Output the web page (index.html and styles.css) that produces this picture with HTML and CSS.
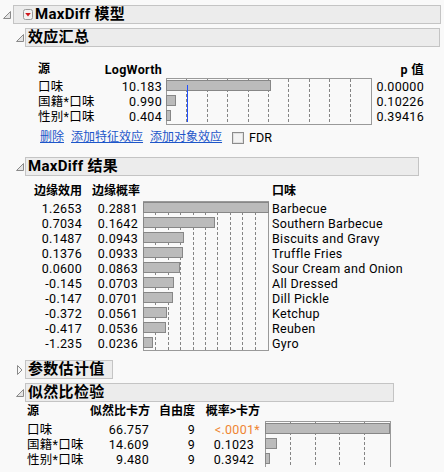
FILE: index.html
```html
<!DOCTYPE html>
<html lang="zh">
<head>
<meta charset="utf-8">
<title>MaxDiff 模型</title>
<link rel="stylesheet" href="styles.css">
</head>
<body>
<div class="page">
  <div class="ohead">
    <span class="tri"><svg width="8" height="8" viewBox="0 0 8 8"><path d="M7.5 0.5 L7.5 7.5 L0.5 7.5 Z" fill="#e4e4e4" stroke="#8a8a8a" stroke-width="1"/></svg></span>
    <div class="hbox">
      <span class="menu"><svg width="10" height="11" viewBox="0 0 10 11"><rect x="0.5" y="0.5" width="9" height="10" rx="2" fill="#f2f2f2" stroke="#9a9a9a"/><path d="M2.2 4 L7.8 4 L5 7.4 Z" fill="#d0161b"/></svg></span>
      <span class="htext">MaxDiff 模型</span>
    </div>
  </div>

  <div class="obody">
    <!-- 效应汇总 -->
    <div class="ohead">
      <span class="tri"><svg width="8" height="8" viewBox="0 0 8 8"><path d="M7.5 0.5 L7.5 7.5 L0.5 7.5 Z" fill="#e4e4e4" stroke="#8a8a8a" stroke-width="1"/></svg></span>
      <div class="hbox"><span class="htext">效应汇总</span></div>
    </div>
    <div class="sbody sb-eff">
      <div class="tbl t-eff">
        <div class="th cj">源</div><div class="th r">LogWorth</div><div></div><div class="th r">p 值</div>
        <div class="chart c-eff">
          <div class="gl"><i></i><i></i><i></i><i></i><i></i><i></i><i></i><i></i><i></i><i></i></div>
          <div class="bars pt1">
            <div class="bar" style="width:105px"></div>
            <div class="bar" style="width:10px"></div>
            <div class="bar" style="width:5px"></div>
          </div>
          <div class="refline"></div>
        </div>
        <div class="td">口味</div><div class="td r">10.183</div><div class="td r">0.00000</div>
        <div class="td">国籍*口味</div><div class="td r">0.990</div><div class="td r">0.10226</div>
        <div class="td">性别*口味</div><div class="td r">0.404</div><div class="td r">0.39416</div>
      </div>
      <div class="links">
        <a class="lnk">删除</a>
        <a class="lnk">添加特征效应</a>
        <a class="lnk">添加对象效应</a>
        <span class="cb"></span>
        <span class="cbl">FDR</span>
      </div>
    </div>

    <!-- MaxDiff 结果 -->
    <div class="ohead mt12">
      <span class="tri"><svg width="8" height="8" viewBox="0 0 8 8"><path d="M7.5 0.5 L7.5 7.5 L0.5 7.5 Z" fill="#e4e4e4" stroke="#8a8a8a" stroke-width="1"/></svg></span>
      <div class="hbox w-res"><span class="htext">MaxDiff 结果</span></div>
    </div>
    <div class="sbody sb-res">
      <div class="tbl t-res">
        <div class="th cj r">边缘效用</div><div class="th cj r">边缘概率</div><div></div><div class="th cj">口味</div>
        <div class="chart c-res">
          <div class="gl"><i></i><i></i><i></i><i></i><i></i><i></i><i></i><i></i><i></i><i></i></div>
          <div class="bars">
            <div class="bar" style="width:126px"></div>
            <div class="bar" style="width:72px"></div>
            <div class="bar" style="width:41px"></div>
            <div class="bar" style="width:40px"></div>
            <div class="bar" style="width:37px"></div>
            <div class="bar" style="width:31px"></div>
            <div class="bar" style="width:30px"></div>
            <div class="bar" style="width:24px"></div>
            <div class="bar" style="width:23px"></div>
            <div class="bar" style="width:10px"></div>
          </div>
        </div>
        <div class="td r">1.2653</div><div class="td r p2">0.2881</div><div class="td">Barbecue</div>
        <div class="td r">0.7034</div><div class="td r p2">0.1642</div><div class="td">Southern Barbecue</div>
        <div class="td r">0.1487</div><div class="td r p2">0.0943</div><div class="td">Biscuits and Gravy</div>
        <div class="td r">0.1376</div><div class="td r p2">0.0933</div><div class="td">Truffle Fries</div>
        <div class="td r">0.0600</div><div class="td r p2">0.0863</div><div class="td">Sour Cream and Onion</div>
        <div class="td r">-0.145</div><div class="td r p2">0.0703</div><div class="td">All Dressed</div>
        <div class="td r">-0.147</div><div class="td r p2">0.0701</div><div class="td">Dill Pickle</div>
        <div class="td r">-0.372</div><div class="td r p2">0.0561</div><div class="td">Ketchup</div>
        <div class="td r">-0.417</div><div class="td r p2">0.0536</div><div class="td">Reuben</div>
        <div class="td r">-1.235</div><div class="td r p2">0.0236</div><div class="td">Gyro</div>
      </div>
    </div>

    <!-- 参数估计值 (collapsed) -->
    <div class="ohead mt9">
      <span class="tri"><svg width="8" height="10" viewBox="0 0 8 10"><path d="M1.5 0.5 L6 5 L1.5 9.5 Z" fill="none" stroke="#8a8a8a" stroke-width="1"/></svg></span>
      <div class="hbox w-par"><span class="htext">参数估计值</span></div>
    </div>

    <!-- 似然比检验 -->
    <div class="ohead mt4">
      <span class="tri"><svg width="8" height="8" viewBox="0 0 8 8"><path d="M7.5 0.5 L7.5 7.5 L0.5 7.5 Z" fill="#e4e4e4" stroke="#8a8a8a" stroke-width="1"/></svg></span>
      <div class="hbox w-lr"><span class="htext">似然比检验</span></div>
    </div>
    <div class="sbody sb-lr">
      <div class="tbl t-lr">
        <div class="th cj">源</div><div class="th cj r">似然比卡方</div><div class="th cj r">自由度</div><div class="th cj r">概率&gt;卡方</div><div></div>
        <div class="chart c-lr">
          <div class="gl"><i></i><i></i><i></i><i></i><i></i></div>
          <div class="bars pt1">
            <div class="bar" style="width:125px"></div>
            <div class="bar" style="width:12px"></div>
            <div class="bar" style="width:5px"></div>
          </div>
        </div>
        <div class="td">口味</div><div class="td r">66.757</div><div class="td r">9</div><div class="td r p5 sig">&lt;.0001<span class="ast">*</span></div>
        <div class="td">国籍*口味</div><div class="td r">14.609</div><div class="td r">9</div><div class="td r p5">0.1023</div>
        <div class="td">性别*口味</div><div class="td r">9.480</div><div class="td r">9</div><div class="td r p5">0.3942</div>
      </div>
    </div>
  </div>
</div>
</body>
</html>
```

FILE: styles.css
```css
html, body {
  margin: 0;
  padding: 0;
  background: #f9f9f9;
}
body {
  font-family: Roboto, "Noto Sans CJK SC", sans-serif;
  font-size: 12.5px;
  color: #000;
}
.page {
  padding: 5px 3px 0 3px;
}

/* outline headers */
.ohead {
  display: flex;
  align-items: center;
}
.tri {
  width: 8px;
  height: 19px;
  margin-right: 1px;
  display: flex;
  align-items: center;
  justify-content: center;
  flex: none;
}
.tri svg { display: block; }
.page > .ohead .tri { margin-right: 2px; }

.hbox {
  flex: 1;
  height: 19px;
  box-sizing: border-box;
  background: #ececec;
  border: 1px solid #c4c4c4;
  display: flex;
  align-items: center;
  padding-left: 2px;
}
.page > .ohead .hbox { padding-left: 9px; }
.menu { display: flex; margin-right: 2px; }
.menu svg { display: block; }
.htext {
  font-size: 15px;
  font-weight: bold;
  line-height: 17px;
  letter-spacing: 0.3px;
  white-space: nowrap;
}
.w-res { flex: none; width: 394px; }
.w-par { flex: none; width: 88px; }
.w-lr  { flex: none; width: 369px; }

.obody {
  margin-top: 4px;
  padding-left: 13px;
  padding-right: 1px;
}
.mt12 { margin-top: 12px; }
.mt9 { margin-top: 9px; }
.mt4 { margin-top: 4px; }

/* tables */
.tbl {
  display: grid;
  line-height: 15px;
  letter-spacing: 0.3px;
  white-space: nowrap;
}
.th { font-weight: bold; }
.cj { font-size: 12px; letter-spacing: 0; }
.r { text-align: right; }
.p2 { padding-right: 2px; }
.p5 { padding-right: 6px; }
.sig { color: #ef8533; }
.ast { margin-right: -6px; }

.sb-eff { padding-top: 15px; }
.t-eff {
  margin-left: 22px;
  grid-template-columns: 57px 67px 210px 52px;
  grid-template-rows: 17px repeat(3, 15px);
}
.sb-res { padding-top: 8px; }
.t-res {
  margin-left: 9px;
  grid-template-columns: 57px 58px 132px auto;
  grid-template-rows: 17px repeat(10, 15px);
}
.sb-lr { padding-top: 2px; }
.t-lr {
  margin-left: 11px;
  grid-template-columns: 63px 59px 46px 65px 131px;
  grid-template-rows: 18px repeat(3, 15px);
}

/* charts */
.chart {
  position: relative;
  box-sizing: border-box;
  border: 1px solid #9a9a9a;
  background: #f9f9f9;
  align-self: start;
}
.c-eff {
  grid-column: 3;
  grid-row: 2 / 5;
  margin-left: 4px;
  margin-top: -1px;
  width: 206px;
  height: 47px;
}
.c-res {
  grid-column: 3;
  grid-row: 2 / 12;
  margin-left: 3px;
  width: 126px;
  height: 150px;
}
.c-lr {
  grid-column: 5;
  grid-row: 2 / 5;
  margin-left: 5px;
  margin-top: -1px;
  width: 126px;
  height: 47px;
}
.gl {
  position: absolute;
  inset: 0;
  display: flex;
}
.gl i {
  flex: 1;
  background-image: repeating-linear-gradient(to bottom, #858585 0 3px, transparent 3px 5px);
  background-size: 1px 100%;
  background-position: right top;
  background-repeat: no-repeat;
}
.gl i:last-child { background: none; }
.bars {
  position: relative;
  display: flex;
  flex-direction: column;
  gap: 4px;
}
.pt1 { padding-top: 1px; }
.bar {
  height: 11px;
  box-sizing: border-box;
  margin-left: -1px;
  background: #bbbbbb;
  border: 1px solid #878787;
}
.refline {
  position: absolute;
  left: 20px;
  top: 6px;
  width: 1px;
  height: 37px;
  background: #2150ff;
}

/* links row */
.links {
  margin-top: 6px;
  margin-left: 24px;
  display: flex;
  align-items: center;
  height: 15px;
  font-size: 12px;
  line-height: 15px;
  white-space: nowrap;
}
.lnk {
  color: #1d56c9;
  text-decoration: underline;
  margin-right: 7px;
}
.cb {
  width: 12px;
  height: 12px;
  box-sizing: border-box;
  border: 1px solid #8c8c8c;
  background: #f3f3f3;
  box-shadow: inset 0 0 0 1px #e0e0e0;
  margin-left: 3px;
  margin-right: 5px;
}
.cbl { color: #000; font-size: 12.5px; }
```
